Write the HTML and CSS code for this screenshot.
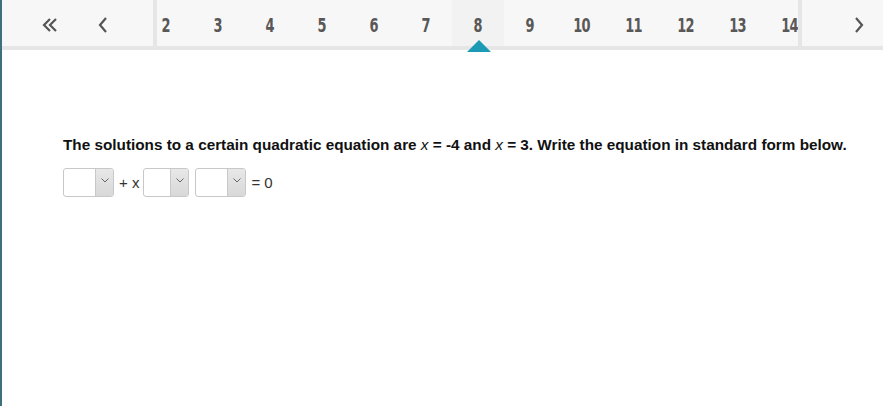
FILE: index.html
```html
<!DOCTYPE html>
<html>
<head>
<meta charset="utf-8">
<link rel="stylesheet" href="styles.css">
</head>
<body>
<div class="frame">
  <nav class="pager">
    <div class="ctrl left">
      <span class="btn dbl"><svg width="18" height="16" viewBox="0 0 18 16"><path d="M8 2 L2 8 L8 14 M14 2 L8 8 L14 14" fill="none" stroke="#555" stroke-width="2.2"/></svg></span>
      <span class="btn"><svg width="12" height="18" viewBox="0 0 12 18"><path d="M9 2 L3 9 L9 16" fill="none" stroke="#555" stroke-width="2.2"/></svg></span>
    </div>
    <div class="sep"></div>
    <div class="pages">
      <div class="track">
        <span class="pg"><span class="n">2</span></span>
        <span class="pg"><span class="n">3</span></span>
        <span class="pg"><span class="n">4</span></span>
        <span class="pg"><span class="n">5</span></span>
        <span class="pg"><span class="n">6</span></span>
        <span class="pg"><span class="n">7</span></span>
        <span class="pg cur"><span class="n">8</span></span>
        <span class="pg"><span class="n">9</span></span>
        <span class="pg"><span class="n">10</span></span>
        <span class="pg"><span class="n">11</span></span>
        <span class="pg"><span class="n">12</span></span>
        <span class="pg"><span class="n">13</span></span>
        <span class="pg"><span class="n">14</span></span>
      </div>
    </div>
    <div class="sep"></div>
    <div class="ctrl right">
      <span class="btn"><svg width="12" height="18" viewBox="0 0 12 18"><path d="M3 2 L9 9 L3 16" fill="none" stroke="#555" stroke-width="2.2"/></svg></span>
    </div>
    <span class="marker"></span>
  </nav>
  <main class="content">
    <p class="question">The solutions to a certain quadratic equation are <i>x</i> = -4 and <i>x</i> = 3. Write the equation in standard form below.</p>
    <div class="answer">
      <span class="sel w1"><span class="val"></span><span class="arrow"><svg width="8" height="5" viewBox="0 0 8 5"><path d="M0.5 0.5 L4 4 L7.5 0.5" fill="none" stroke="#666" stroke-width="1"/></svg></span></span>
      <span class="txt">+ x</span>
      <span class="sel w2"><span class="val"></span><span class="arrow"><svg width="8" height="5" viewBox="0 0 8 5"><path d="M0.5 0.5 L4 4 L7.5 0.5" fill="none" stroke="#666" stroke-width="1"/></svg></span></span>
      <span class="sel w1 third"><span class="val"></span><span class="arrow"><svg width="8" height="5" viewBox="0 0 8 5"><path d="M0.5 0.5 L4 4 L7.5 0.5" fill="none" stroke="#666" stroke-width="1"/></svg></span></span>
      <span class="txt">= 0</span>
    </div>
  </main>
</div>
</body>
</html>
```
FILE: styles.css
```css
html, body {
  margin: 0;
  padding: 0;
  background: #fff;
}
.frame {
  width: 883px;
  height: 406px;
  box-sizing: border-box;
  border-left: 2px solid #3f6f7b;
  overflow: hidden;
}
.pager {
  position: relative;
  display: flex;
  height: 46px;
  background: #f7f7f7;
  border-bottom: 4px solid #e6e6e6;
}
.ctrl {
  display: flex;
  align-items: center;
}
.ctrl.left {
  width: 151px;
}
.ctrl.left .btn {
  width: 52px;
}
.ctrl.left .btn.dbl {
  margin-left: 23px;
}
.ctrl.right {
  flex: 1;
  padding-left: 51px;
}
.btn {
  display: flex;
  justify-content: center;
  align-items: center;
  height: 46px;
  padding-top: 3px;
  box-sizing: border-box;
}
.sep {
  width: 4px;
  background: #e6e6e6;
}
.pages {
  width: 641px;
  overflow: hidden;
}
.track {
  display: flex;
  margin-left: -17px;
}
.pg {
  flex: 0 0 52px;
  height: 46px;
  display: flex;
  align-items: center;
  justify-content: center;
  padding-top: 4px;
  box-sizing: border-box;
}
.n {
  display: inline-block;
  font-family: "DejaVu Sans Condensed", "DejaVu Sans", sans-serif;
  font-weight: bold;
  font-size: 20px;
  letter-spacing: -1px;
  color: #5a5757;
  transform: scaleX(0.72);
}
.pg.cur {
  background: #f2f2f2;
}
.marker {
  position: absolute;
  left: 465px;
  top: 40px;
  width: 0;
  height: 0;
  border-left: 12px solid transparent;
  border-right: 12px solid transparent;
  border-bottom: 12px solid #1a9ab4;
}
.content {
  padding: 86px 0 0 61px;
}
.question {
  margin: 0;
  font-family: "Liberation Sans", Arial, sans-serif;
  font-weight: bold;
  font-size: 15.3px;
  color: #111;
  line-height: 18px;
}
.question i {
  font-weight: normal;
  font-style: italic;
}
.answer {
  display: flex;
  align-items: center;
  margin-top: 14px;
  font-family: "Liberation Sans", Arial, sans-serif;
  font-size: 15px;
  color: #333;
}
.sel {
  display: flex;
  height: 29px;
  box-sizing: border-box;
  border: 1px solid #c8c8c8;
  border-radius: 3px;
  overflow: hidden;
  background: #fff;
}
.sel.w1 { width: 51px; }
.sel.w2 { width: 46px; }
.val { flex: 1; }
.arrow {
  width: 18px;
  background: linear-gradient(#e8e8e8, #d8d8d8);
  border-left: 1px solid #c8c8c8;
  display: flex;
  justify-content: center;
  padding-top: 9px;
  box-sizing: border-box;
}
.txt {
  margin: 0 4px 0 5px;
}
.sel.third { margin-left: 6px; }
```
